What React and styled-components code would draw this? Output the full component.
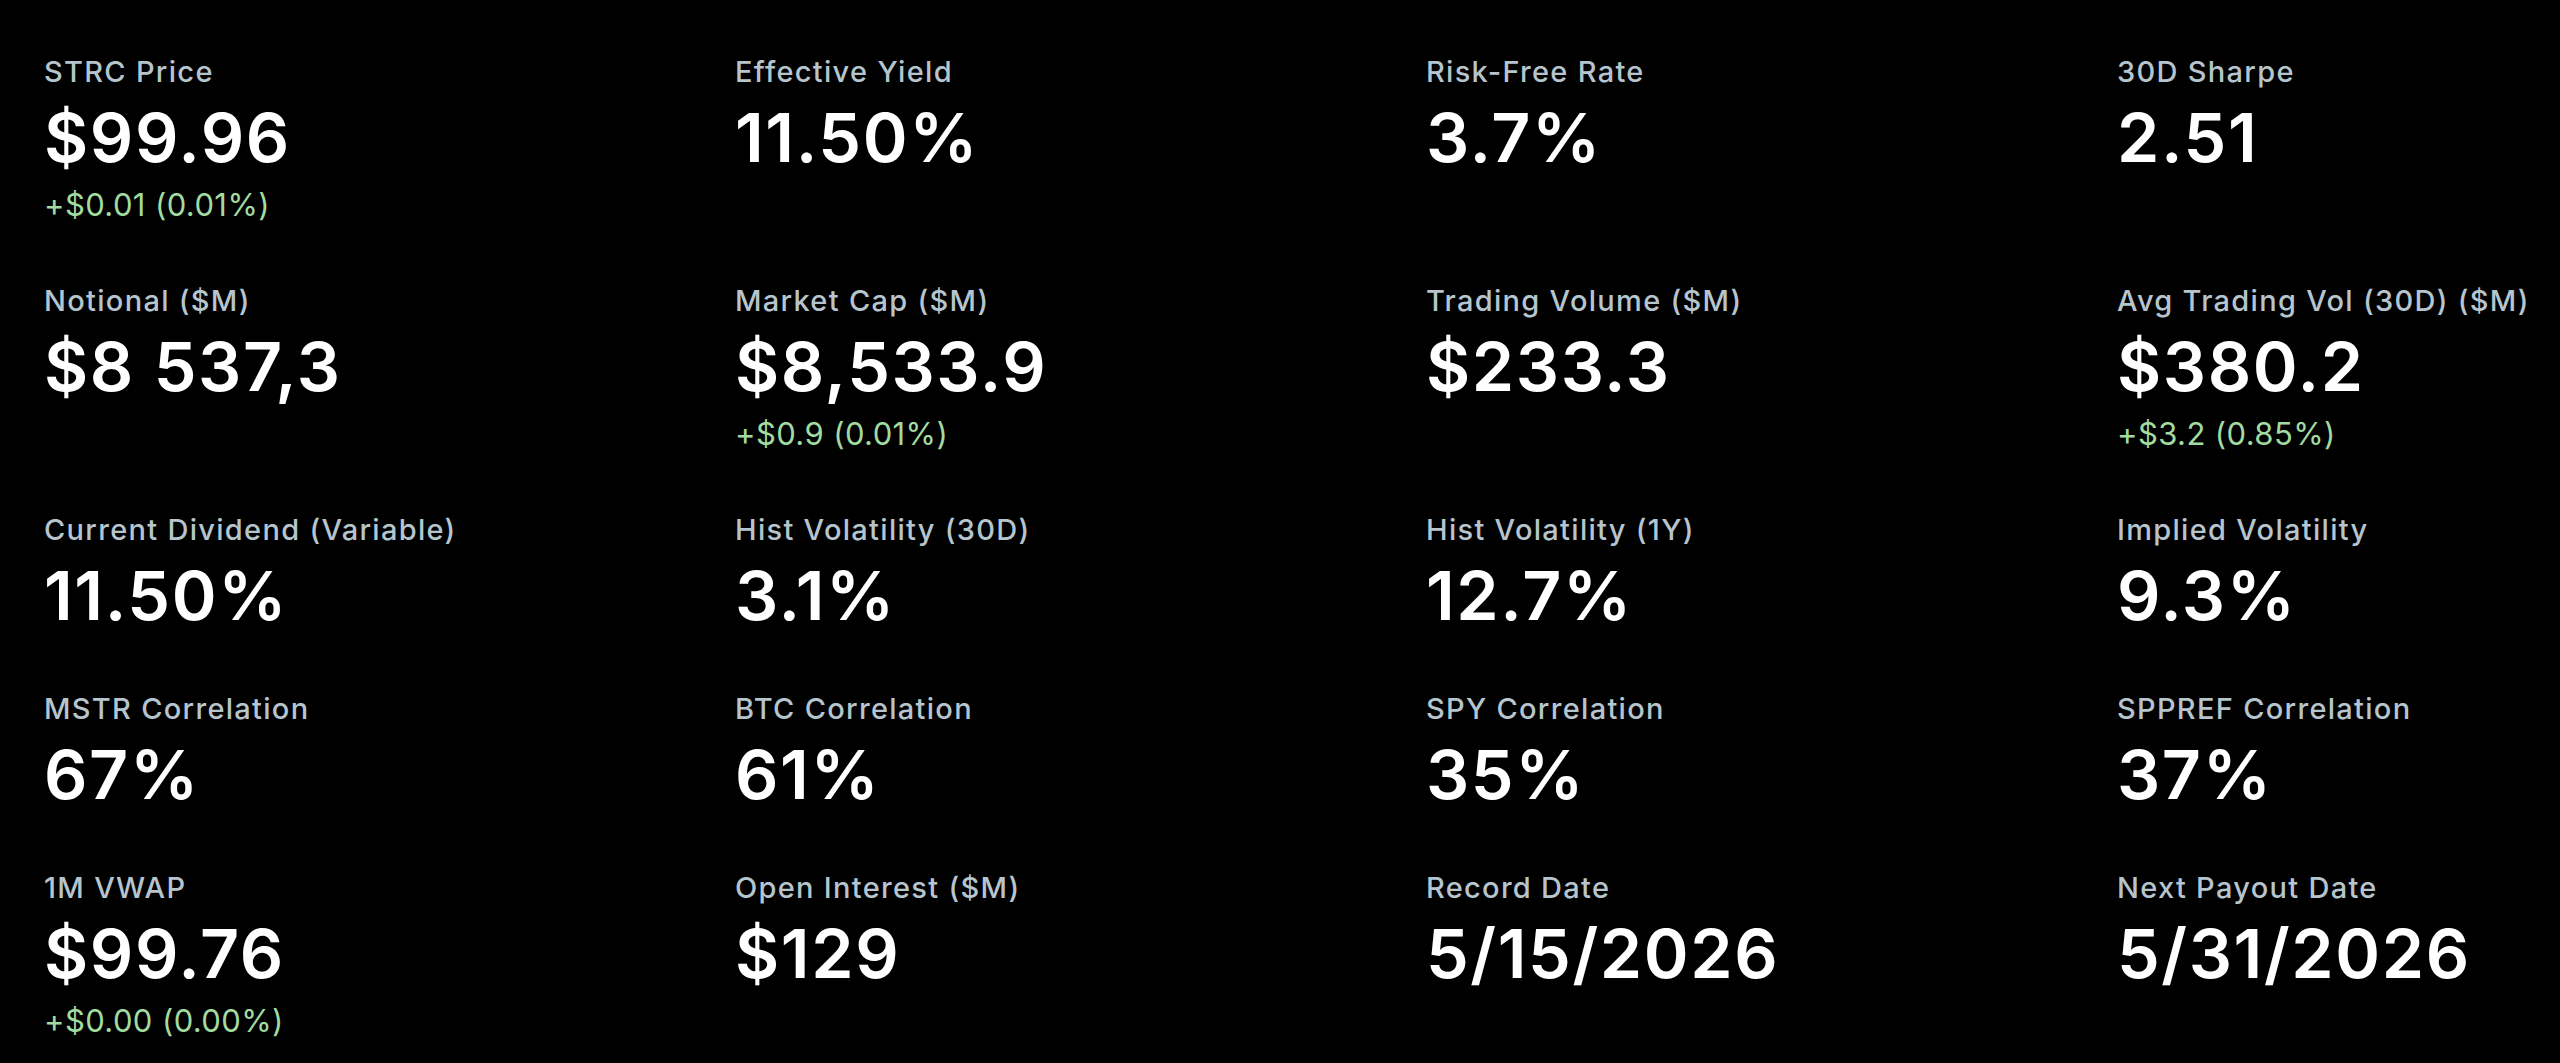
import React from "react";
import styled, { createGlobalStyle } from "styled-components";

const GlobalStyle = createGlobalStyle`
  html, body {
    margin: 0;
    padding: 0;
    background: #000;
  }
  body {
    font-family: Inter, "Noto Sans", sans-serif;
    color: #fff;
  }
`;

const Page = styled.div`
  min-height: 100vh;
  background: #000;
  padding: 55px 28px 0 44px;
  box-sizing: border-box;
  overflow: hidden;
`;

const StatGrid = styled.div`
  display: grid;
  grid-template-columns: repeat(4, 415px);
  column-gap: 276px;
  row-gap: 61px;
  align-items: start;
`;

const Stat = styled.div`
  display: flex;
  flex-direction: column;
  white-space: nowrap;
`;

const Label = styled.div`
  font-size: 29px;
  line-height: 34px;
  font-weight: 500;
  letter-spacing: 1.3px;
  color: #b6c5cd;
`;

const Value = styled.div`
  margin-top: 12px;
  font-size: 68px;
  line-height: 72px;
  font-weight: 600;
  letter-spacing: 1.6px;
  color: #ffffff;
`;

const Change = styled.div`
  margin-top: 14px;
  font-size: 31px;
  line-height: 36px;
  font-weight: 400;
  letter-spacing: 0.4px;
  color: ${(p) => (p.negative ? "#f08a8a" : "#a2dba0")};
`;

const stats = [
  { label: "STRC Price", value: "$99.96", change: "+$0.01 (0.01%)" },
  { label: "Effective Yield", value: "11.50%" },
  { label: "Risk-Free Rate", value: "3.7%" },
  { label: "30D Sharpe", value: "2.51" },
  { label: "Notional ($M)", value: "$8 537,3" },
  { label: "Market Cap ($M)", value: "$8,533.9", change: "+$0.9 (0.01%)" },
  { label: "Trading Volume ($M)", value: "$233.3" },
  { label: "Avg Trading Vol (30D) ($M)", value: "$380.2", change: "+$3.2 (0.85%)" },
  { label: "Current Dividend (Variable)", value: "11.50%" },
  { label: "Hist Volatility (30D)", value: "3.1%" },
  { label: "Hist Volatility (1Y)", value: "12.7%" },
  { label: "Implied Volatility", value: "9.3%" },
  { label: "MSTR Correlation", value: "67%" },
  { label: "BTC Correlation", value: "61%" },
  { label: "SPY Correlation", value: "35%" },
  { label: "SPPREF Correlation", value: "37%" },
  { label: "1M VWAP", value: "$99.76", change: "+$0.00 (0.00%)" },
  { label: "Open Interest ($M)", value: "$129" },
  { label: "Record Date", value: "5/15/2026" },
  { label: "Next Payout Date", value: "5/31/2026" },
];

export default function App() {
  return (
    <>
      <GlobalStyle />
      <Page>
        <StatGrid>
          {stats.map((s) => (
            <Stat key={s.label}>
              <Label>{s.label}</Label>
              <Value>{s.value}</Value>
              {s.change && <Change>{s.change}</Change>}
            </Stat>
          ))}
        </StatGrid>
      </Page>
    </>
  );
}
